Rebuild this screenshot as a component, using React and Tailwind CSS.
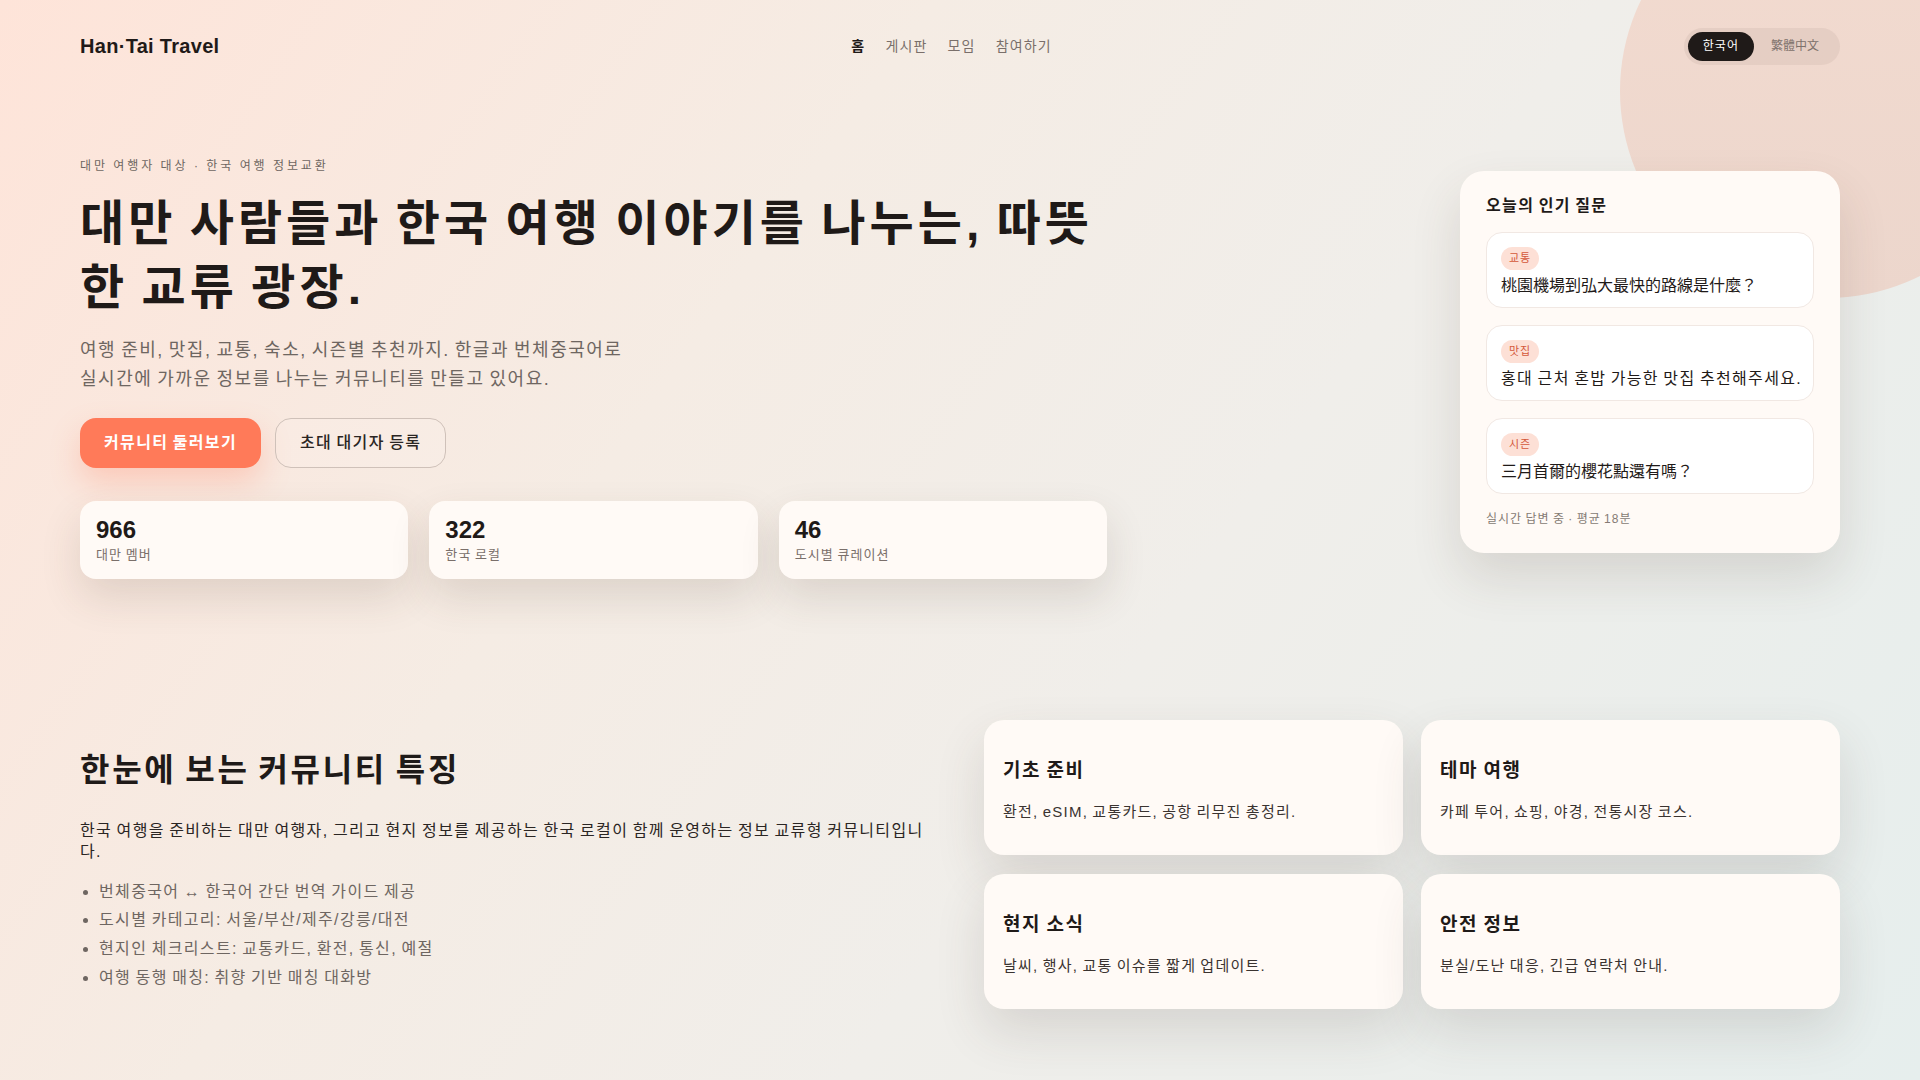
import React from "react";

const questions = [
  { tag: "교통", text: "桃園機場到弘大最快的路線是什麼？", ko: false },
  { tag: "맛집", text: "홍대 근처 혼밥 가능한 맛집 추천해주세요.", ko: true },
  { tag: "시즌", text: "三月首爾的櫻花點還有嗎？", ko: false },
];

const stats = [
  { n: "966", l: "대만 멤버" },
  { n: "322", l: "한국 로컬" },
  { n: "46", l: "도시별 큐레이션" },
];

const features = [
  { t: "기초 준비", d: "환전, eSIM, 교통카드, 공항 리무진 총정리." },
  { t: "테마 여행", d: "카페 투어, 쇼핑, 야경, 전통시장 코스." },
  { t: "현지 소식", d: "날씨, 행사, 교통 이슈를 짧게 업데이트." },
  { t: "안전 정보", d: "분실/도난 대응, 긴급 연락처 안내." },
];

const bullets = [
  "번체중국어 ↔ 한국어 간단 번역 가이드 제공",
  "도시별 카테고리: 서울/부산/제주/강릉/대전",
  "현지인 체크리스트: 교통카드, 환전, 통신, 예절",
  "여행 동행 매칭: 취향 기반 매칭 대화방",
];

const KO = "tracking-[0.084em] [word-spacing:-0.084em]";

export default function App() {
  return (
    <div
      className="relative min-h-screen overflow-hidden bg-[linear-gradient(125deg,#fee4d9_0%,#f5ece4_35%,#f0eeea_60%,#e6eeed_100%)] text-[#1f1a18]"
      style={{ fontFamily: '"Liberation Sans", "Noto Sans CJK KR", "Noto Sans CJK TC", sans-serif' }}
    >
      <div className="absolute left-[1620px] top-[-116px] h-[414px] w-[414px] rounded-full bg-[linear-gradient(180deg,#f3dbd0,#ecd6cc)]" />

      <div className="relative px-20">
        {/* Header */}
        <header className="flex h-[92px] items-center justify-between">
          <div className="text-[20px] font-bold tracking-[0.3px] text-[#1f1a18]">Han·Tai Travel</div>
          <nav className={`flex items-center gap-5 text-[14px] text-[#7a6f6a] ${KO}`}>
            <span className="font-bold text-[#1f1a18]">홈</span>
            <span>게시판</span>
            <span>모임</span>
            <span>참여하기</span>
          </nav>
          <div className="flex items-center rounded-full bg-[#e2cbc1]/80 p-1 text-[12px]">
            <span className={`flex h-[29px] items-center rounded-full bg-[#1f1a18] px-[15px] text-white ${KO}`}>한국어</span>
            <span className="flex h-[29px] items-center px-[17px] text-[#7d716b]">繁體中文</span>
          </div>
        </header>

        {/* Hero */}
        <section className="flex items-start justify-between pt-[66px]">
          <div className="w-[1027px]">
            <div className="text-[12px] leading-4 tracking-[0.24em] text-[#6e6661] [word-spacing:-0.06em]">
              대만 여행자 대상 · 한국 여행 정보교환
            </div>
            <h1 className={`mt-[18px] text-[48px] font-bold leading-[64px] text-[#1f1a18] ${KO}`}>
              대만 사람들과 한국 여행 이야기를 나누는, 따뜻한 교류 광장.
            </h1>
            <p className={`mt-4 max-w-[552px] text-[18px] leading-[29px] text-[#6e6661] ${KO}`}>
              여행 준비, 맛집, 교통, 숙소, 시즌별 추천까지. 한글과 번체중국어로 실시간에 가까운 정보를 나누는 커뮤니티를 만들고 있어요.
            </p>
            <div className="mt-6 flex gap-[14px]">
              <button className={`h-[50px] rounded-2xl bg-[#ff7a59] px-6 text-[16px] font-bold text-white shadow-[0_14px_30px_rgba(255,122,89,0.28)] ${KO}`}>
                커뮤니티 둘러보기
              </button>
              <button className={`h-[50px] rounded-2xl border border-[#cfc1b9] bg-white/10 px-6 text-[16px] font-medium text-[#2a2523] ${KO}`}>
                초대 대기자 등록
              </button>
            </div>
            <div className="mt-[33px] grid grid-cols-3 gap-[21px]">
              {stats.map((s) => (
                <div
                  key={s.n}
                  className="rounded-2xl bg-[#fffaf6] px-4 py-[15px] shadow-[0_18px_40px_rgba(80,60,45,0.14)]"
                >
                  <div className="text-2xl font-bold leading-7 text-[#1f1a18]">{s.n}</div>
                  <div className={`mt-[2px] text-[13px] leading-[18px] text-[#7a6f6a] ${KO}`}>{s.l}</div>
                </div>
              ))}
            </div>
          </div>

          <div className="mt-[13px] w-[380px] rounded-3xl bg-[#fffaf6] px-[26px] pb-[26px] pt-6 shadow-[0_24px_50px_rgba(80,60,45,0.14)]">
            <div className={`text-[16px] font-bold leading-[22px] text-[#1f1a18] ${KO}`}>오늘의 인기 질문</div>
            <div className="mt-[15px] flex flex-col gap-[17px]">
              {questions.map((q) => (
                <div key={q.tag} className="rounded-2xl border border-[#f1e8e3] bg-white px-[14px] pb-[9px] pt-3">
                  <span className={`inline-block rounded-full bg-[#fde0d6] px-2 py-1 text-[11px] leading-[15px] text-[#d4583a] ${KO}`}>
                    {q.tag}
                  </span>
                  <div className={`mt-1 whitespace-nowrap text-[16px] leading-6 text-[#1f1a18] ${q.ko ? KO : ""}`}>{q.text}</div>
                </div>
              ))}
            </div>
            <div className={`mt-[17px] text-[12px] leading-4 text-[#857a74] ${KO}`}>실시간 답변 중 · 평균 18분</div>
          </div>
        </section>

        {/* Features */}
        <section className="mt-[141px] grid grid-cols-2 items-center gap-12 pb-[70px]">
          <div className="pt-[13px]">
            <h2 className={`text-[32px] font-bold leading-10 text-[#1f1a18] ${KO}`}>한눈에 보는 커뮤니티 특징</h2>
            <p className={`mt-[30px] max-w-[846px] text-[16px] leading-[21px] text-[#2a2523] ${KO}`}>
              한국 여행을 준비하는 대만 여행자, 그리고 현지 정보를 제공하는 한국 로컬이 함께 운영하는 정보 교류형 커뮤니티입니다.
            </p>
            <ul className={`mt-4 list-disc pl-[19px] text-[16px] leading-[28.7px] text-[#6e6661] ${KO}`}>
              {bullets.map((b) => (
                <li key={b}>{b}</li>
              ))}
            </ul>
          </div>
          <div className="grid grid-cols-2 gap-x-[18px] gap-y-[19px]">
            {features.map((f) => (
              <div
                key={f.t}
                className="flex h-[135px] flex-col justify-center rounded-[20px] bg-[#fffaf6] px-[19px] pt-[6px] shadow-[0_22px_50px_rgba(70,60,50,0.14)]"
              >
                <div className={`text-[19px] font-bold leading-[26px] text-[#1f1a18] ${KO}`}>{f.t}</div>
                <div className={`mt-[17px] text-[15px] leading-[22px] text-[#3a3330] ${KO}`}>{f.d}</div>
              </div>
            ))}
          </div>
        </section>
      </div>
    </div>
  );
}
